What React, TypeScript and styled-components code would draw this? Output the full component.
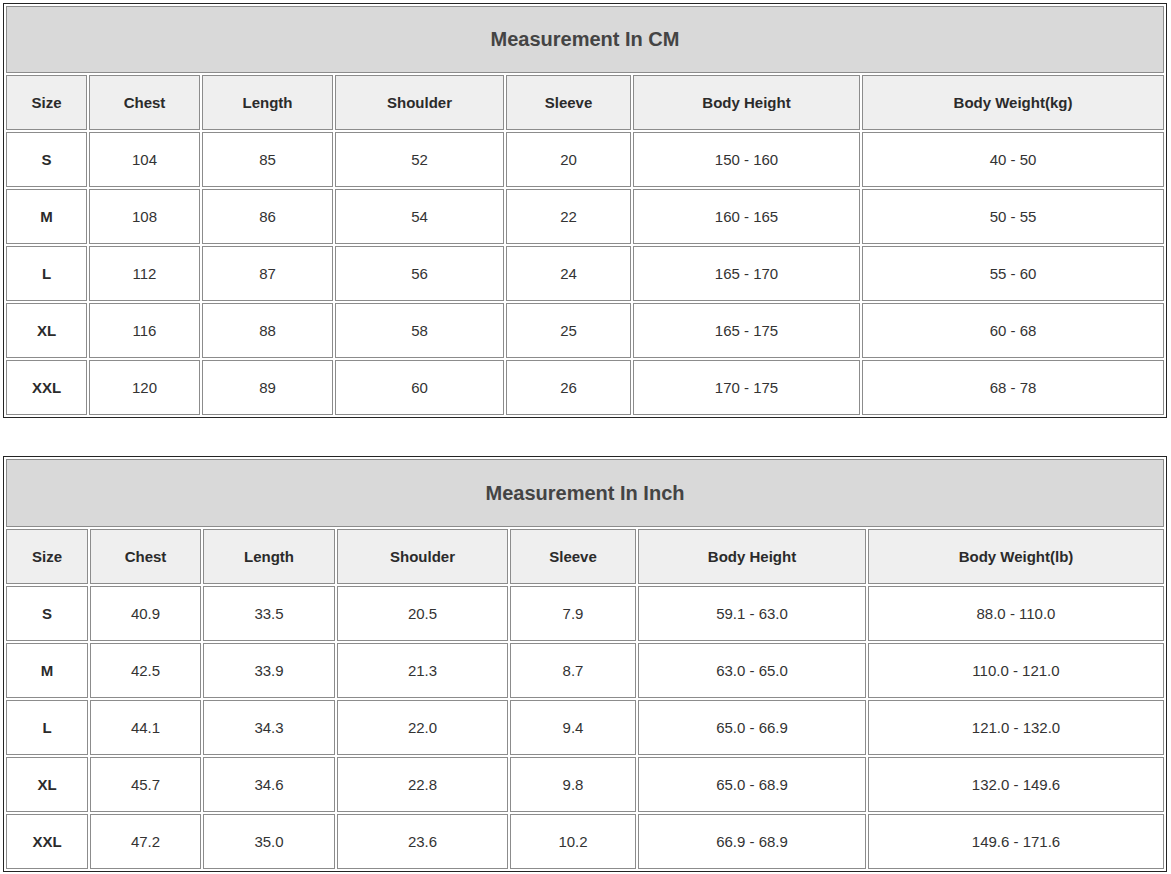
import React from "react";
import styled, { createGlobalStyle } from "styled-components";

const GlobalStyle = createGlobalStyle`
  html, body {
    margin: 0;
    padding: 0;
    background: #ffffff;
  }
  body {
    font-family: "Liberation Sans", Arial, sans-serif;
  }
`;

const Page = styled.div`
  display: flex;
  flex-direction: column;
  align-items: flex-start;
  gap: 38px;
  padding: 3px 0 0 3px;
`;

const Chart = styled.div<{ $cols: number[]; $titleH: number }>`
  display: grid;
  grid-template-columns: ${(p) => p.$cols.map((c) => `${c}px`).join(" ")};
  grid-template-rows: ${(p) => p.$titleH}px;
  grid-auto-rows: 55px;
  gap: 2px;
  padding: 2px;
  border: 1px solid #242424;
  background: #ffffff;
`;

const TitleCell = styled.div`
  grid-column: 1 / -1;
  box-sizing: border-box;
  border: 1px solid #8c8c8c;
  background: #d9d9d9;
  display: flex;
  align-items: center;
  justify-content: center;
  font-size: 20px;
  font-weight: 700;
  color: #444444;
`;

const Cell = styled.div<{ $head?: boolean; $bold?: boolean }>`
  box-sizing: border-box;
  border: 1px solid #8c8c8c;
  background: ${(p) => (p.$head ? "#efefef" : "#ffffff")};
  display: flex;
  align-items: center;
  justify-content: center;
  font-size: 15px;
  font-weight: ${(p) => (p.$head || p.$bold ? 700 : 400)};
  color: ${(p) => (p.$head || p.$bold ? "#2b2b2b" : "#333333")};
`;

type TableData = {
  title: string;
  titleHeight: number;
  cols: number[];
  headers: string[];
  rows: string[][];
};

const tables: TableData[] = [
  {
    title: "Measurement In CM",
    titleHeight: 67,
    cols: [81, 111, 131, 169, 125, 227, 302],
    headers: ["Size", "Chest", "Length", "Shoulder", "Sleeve", "Body Height", "Body Weight(kg)"],
    rows: [
      ["S", "104", "85", "52", "20", "150 - 160", "40 - 50"],
      ["M", "108", "86", "54", "22", "160 - 165", "50 - 55"],
      ["L", "112", "87", "56", "24", "165 - 170", "55 - 60"],
      ["XL", "116", "88", "58", "25", "165 - 175", "60 - 68"],
      ["XXL", "120", "89", "60", "26", "170 - 175", "68 - 78"],
    ],
  },
  {
    title: "Measurement In Inch",
    titleHeight: 68,
    cols: [82, 111, 132, 171, 126, 228, 296],
    headers: ["Size", "Chest", "Length", "Shoulder", "Sleeve", "Body Height", "Body Weight(lb)"],
    rows: [
      ["S", "40.9", "33.5", "20.5", "7.9", "59.1 - 63.0", "88.0 - 110.0"],
      ["M", "42.5", "33.9", "21.3", "8.7", "63.0 - 65.0", "110.0 - 121.0"],
      ["L", "44.1", "34.3", "22.0", "9.4", "65.0 - 66.9", "121.0 - 132.0"],
      ["XL", "45.7", "34.6", "22.8", "9.8", "65.0 - 68.9", "132.0 - 149.6"],
      ["XXL", "47.2", "35.0", "23.6", "10.2", "66.9 - 68.9", "149.6 - 171.6"],
    ],
  },
];

function SizeChart({ data }: { data: TableData }) {
  return (
    <Chart $cols={data.cols} $titleH={data.titleHeight}>
      <TitleCell>{data.title}</TitleCell>
      {data.headers.map((h) => (
        <Cell key={h} $head>
          {h}
        </Cell>
      ))}
      {data.rows.map((row) =>
        row.map((v, i) => (
          <Cell key={row[0] + i} $bold={i === 0}>
            {v}
          </Cell>
        ))
      )}
    </Chart>
  );
}

export default function App() {
  return (
    <>
      <GlobalStyle />
      <Page>
        {tables.map((t) => (
          <SizeChart key={t.title} data={t} />
        ))}
      </Page>
    </>
  );
}
